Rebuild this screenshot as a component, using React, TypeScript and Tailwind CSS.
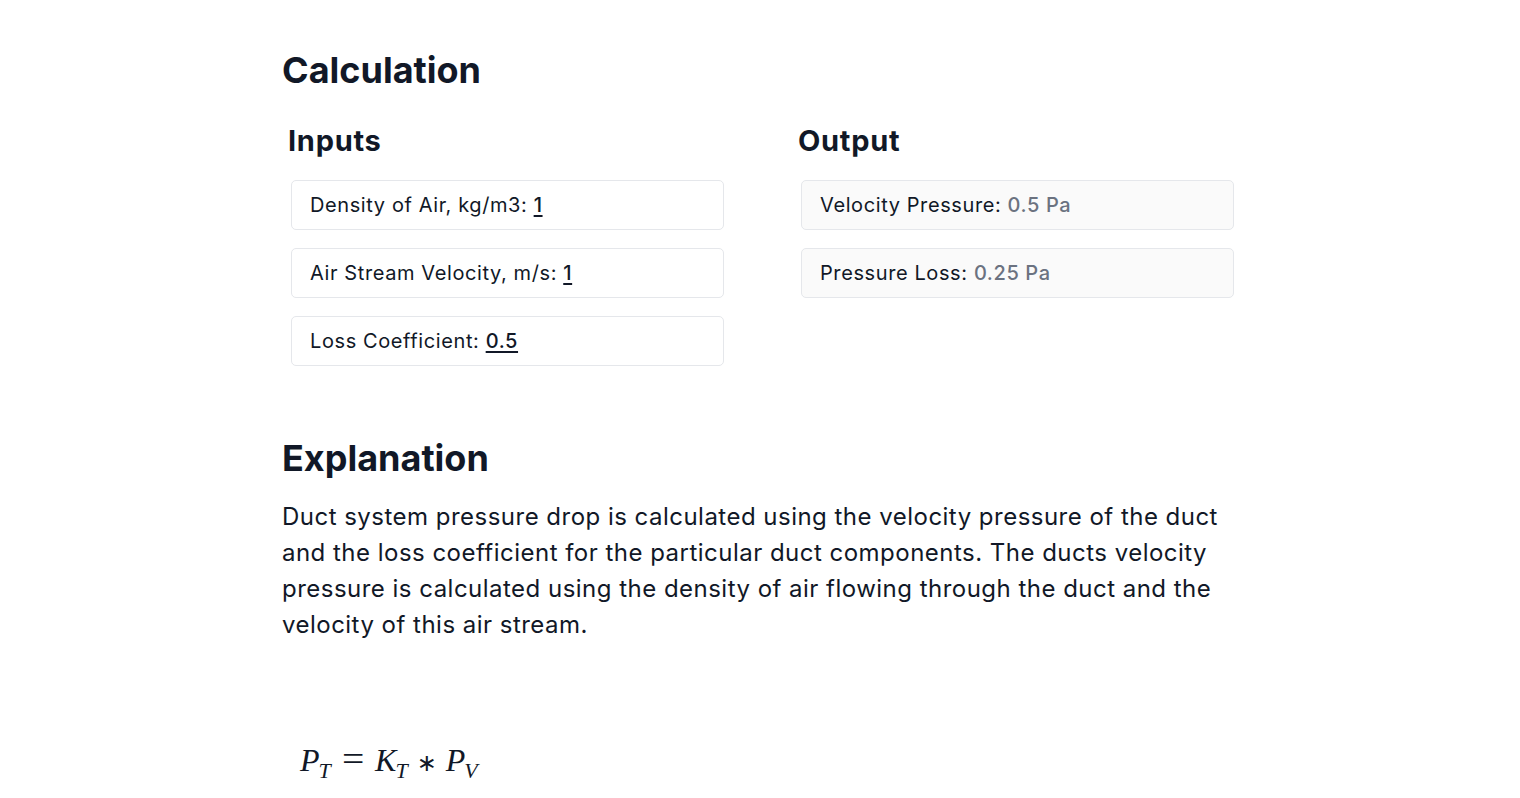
import React from 'react';

const inputs = [
  { label: 'Density of Air, kg/m3', value: '1' },
  { label: 'Air Stream Velocity, m/s', value: '1' },
  { label: 'Loss Coefficient', value: '0.5' },
];

const outputs = [
  { label: 'Velocity Pressure', value: '0.5 Pa' },
  { label: 'Pressure Loss', value: '0.25 Pa' },
];

const Field: React.FC<{ label: string; value: string; output?: boolean }> = ({ label, value, output }) => (
  <div className={`w-[433px] h-[50px] border border-[#e5e7eb] rounded-[5px] px-[18px] flex items-center text-[20px] tracking-[0.03em] ${output ? 'bg-[#fafafa]' : 'bg-white'}`}>
    <span>
      {label}:{' '}
      {output ? (
        <span className="text-[#6b7280] font-medium">{value}</span>
      ) : (
        <span className="font-medium underline underline-offset-[3px] decoration-[1.5px]">{value}</span>
      )}
    </span>
  </div>
);

const App: React.FC = () => {
  return (
    <div className="bg-white min-h-screen text-[#111827] font-['Inter',sans-serif]">
      <div className="w-[956px] mx-auto pt-[48px]">
        <h2 className="text-[36px] font-bold leading-[44px]">Calculation</h2>

        <div className="grid grid-cols-[510px_510px] mt-[31px] pl-[6px]">
          <div>
            <h3 className="text-[29px] font-bold leading-[36px] tracking-[0.025em]">Inputs</h3>
            <div className="mt-[21px] flex flex-col gap-[18px] pl-[3px]">
              {inputs.map(i => <Field key={i.label} {...i} />)}
            </div>
          </div>
          <div>
            <h3 className="text-[29px] font-bold leading-[36px] tracking-[0.025em]">Output</h3>
            <div className="mt-[21px] flex flex-col gap-[18px] pl-[3px]">
              {outputs.map(o => <Field key={o.label} {...o} output />)}
            </div>
          </div>
        </div>

        <h2 className="text-[36px] font-bold leading-[44px] mt-[70px]">Explanation</h2>
        <p className="text-[24px] leading-[36px] tracking-[0.02em] mt-[19px]">
          Duct system pressure drop is calculated using the velocity pressure of the duct and the loss coefficient for the particular duct components. The ducts velocity pressure is calculated using the density of air flowing through the duct and the velocity of this air stream.
        </p>

        <div className="mt-[96px] pl-[18px] flex items-baseline text-[32px] leading-[40px] font-['Liberation_Serif',serif]">
          <span className="italic">P</span>
          <sub className="italic text-[22px] -ml-[1px] bottom-[-0.3em]">T</sub>
          <span className="mx-[12px] text-[36px] scale-x-110">=</span>
          <span className="italic">K</span>
          <sub className="italic text-[22px] -ml-[1px] bottom-[-0.3em]">T</sub>
          <span className="mx-[9px] font-['DejaVu_Sans',sans-serif] text-[24px]">∗</span>
          <span className="italic">P</span>
          <sub className="italic text-[22px] -ml-[1px] bottom-[-0.3em]">V</sub>
        </div>
      </div>
    </div>
  );
};

export default App;
